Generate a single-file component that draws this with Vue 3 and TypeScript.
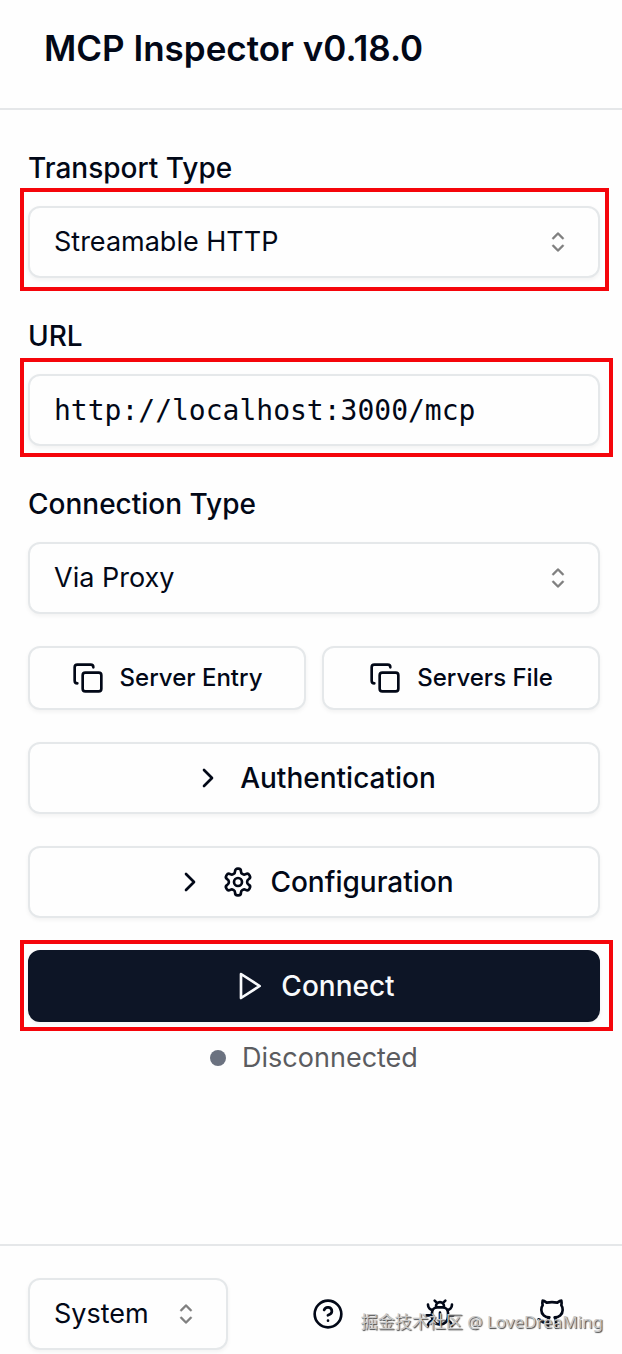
<script setup lang="ts">
import { ref } from 'vue'

const transport = ref('Streamable HTTP')
const url = ref('http://localhost:3000/mcp')
const connection = ref('Via Proxy')
const theme = ref('System')

const caretPath =
  'M4.93 5.43a.45.45 0 0 0 .64.64L7.5 4.14l1.93 1.93a.45.45 0 0 0 .64-.64L7.82 3.18a.45.45 0 0 0-.64 0ZM10.07 9.57a.45.45 0 0 0-.64-.64L7.5 10.86 5.57 8.93a.45.45 0 0 0-.64.64l2.25 2.25a.45.45 0 0 0 .64 0Z'
const copyActions = ['Server Entry', 'Servers File']
</script>

<template>
  <div class="sidebar">
    <header class="header">
      <h1>MCP Inspector v0.18.0</h1>
    </header>

    <main class="body">
      <div class="field">
        <label for="transport">Transport Type</label>
        <div class="select-box marked marked-narrow">
          <select id="transport" v-model="transport">
            <option>Streamable HTTP</option>
            <option>STDIO</option>
            <option>SSE</option>
          </select>
          <svg class="caret" viewBox="0 0 15 15" aria-hidden="true"><path :d="caretPath" /></svg>
        </div>
      </div>

      <div class="field">
        <label for="url">URL</label>
        <div class="marked marked-url">
          <input id="url" v-model="url" type="text" spellcheck="false" />
        </div>
      </div>

      <div class="field">
        <label for="connection">Connection Type</label>
        <div class="select-box">
          <select id="connection" v-model="connection">
            <option>Via Proxy</option>
            <option>Direct</option>
          </select>
          <svg class="caret" viewBox="0 0 15 15" aria-hidden="true"><path :d="caretPath" /></svg>
        </div>
      </div>

      <div class="copy-row">
        <button v-for="name in copyActions" :key="name" type="button" class="btn btn-small">
          <svg class="icon" viewBox="0 0 24 24" aria-hidden="true">
            <rect x="8" y="8" width="14" height="14" rx="2" />
            <path d="M4 16c-1.1 0-2-.9-2-2V4c0-1.1.9-2 2-2h10c1.1 0 2 .9 2 2" />
          </svg>
          {{ name }}
        </button>
      </div>

      <button type="button" class="btn">
        <svg class="icon" viewBox="0 0 24 24" aria-hidden="true"><path d="m9 18 6-6-6-6" /></svg>
        Authentication
      </button>

      <button type="button" class="btn">
        <svg class="icon" viewBox="0 0 24 24" aria-hidden="true"><path d="m9 18 6-6-6-6" /></svg>
        <svg class="icon" viewBox="0 0 24 24" aria-hidden="true">
          <path
            d="M12.22 2h-.44a2 2 0 0 0-2 2v.18a2 2 0 0 1-1 1.73l-.43.25a2 2 0 0 1-2 0l-.15-.08a2 2 0 0 0-2.73.73l-.22.38a2 2 0 0 0 .73 2.73l.15.1a2 2 0 0 1 1 1.72v.51a2 2 0 0 1-1 1.74l-.15.09a2 2 0 0 0-.73 2.73l.22.38a2 2 0 0 0 2.73.73l.15-.08a2 2 0 0 1 2 0l.43.25a2 2 0 0 1 1 1.73V20a2 2 0 0 0 2 2h.44a2 2 0 0 0 2-2v-.18a2 2 0 0 1 1-1.73l.43-.25a2 2 0 0 1 2 0l.15.08a2 2 0 0 0 2.73-.73l.22-.39a2 2 0 0 0-.73-2.73l-.15-.08a2 2 0 0 1-1-1.74v-.5a2 2 0 0 1 1-1.74l.15-.09a2 2 0 0 0 .73-2.73l-.22-.38a2 2 0 0 0-2.73-.73l-.15.08a2 2 0 0 1-2 0l-.43-.25a2 2 0 0 1-1-1.73V4a2 2 0 0 0-2-2z"
          />
          <circle cx="12" cy="12" r="3" />
        </svg>
        Configuration
      </button>

      <div class="connect-group">
        <div class="marked marked-connect">
          <button type="button" class="btn btn-primary">
            <svg class="icon play" viewBox="0 0 24 24" aria-hidden="true"><path d="M6 3 20 12 6 21Z" /></svg>
            Connect
          </button>
        </div>
        <div class="status" role="status">
          <span class="dot"></span>
          <span>Disconnected</span>
        </div>
      </div>
    </main>

    <footer class="footer">
      <div class="select-box theme">
        <select id="theme" v-model="theme" aria-label="Theme">
          <option>System</option>
          <option>Light</option>
          <option>Dark</option>
        </select>
        <svg class="caret" viewBox="0 0 15 15" aria-hidden="true"><path :d="caretPath" /></svg>
      </div>
      <nav class="links">
        <a href="#help" aria-label="Help">
          <svg class="icon" viewBox="0 0 24 24" aria-hidden="true">
            <circle cx="12" cy="12" r="10" />
            <path d="M9.09 9a3 3 0 0 1 5.83 1c0 2-3 3-3 3M12 17h.01" />
          </svg>
        </a>
        <a href="#bug" aria-label="Report a bug">
          <svg class="icon" viewBox="0 0 24 24" aria-hidden="true">
            <path
              d="m8 2 1.88 1.88M14.12 3.88 16 2M9 7.13v-1a3 3 0 1 1 6 0v1M12 20c-3.3 0-6-2.7-6-6v-3a4 4 0 0 1 4-4h4a4 4 0 0 1 4 4v3c0 3.3-2.7 6-6 6M12 20v-9M6.53 9C4.6 8.8 3 7.1 3 5M6 13H2M3 21c0-2.1 1.7-3.9 3.8-4M20.97 5c0 2.1-1.6 3.8-3.5 4M22 13h-4M17.2 17c2.1.1 3.8 1.9 3.8 4"
            />
          </svg>
        </a>
        <a href="#source" aria-label="Source code">
          <svg class="icon" viewBox="0 0 24 24" aria-hidden="true">
            <path
              d="M15 22v-4a4.8 4.8 0 0 0-1-3.5c3 0 6-2 6-5.5.08-1.25-.27-2.48-1-3.5.28-1.15.28-2.35 0-3.5 0 0-1 0-3 1.5-2.64-.5-5.36-.5-8 0C6 2 5 2 5 2c-.3 1.15-.3 2.35 0 3.5A5.4 5.4 0 0 0 4 9c0 3.5 3 5.5 6 5.5-.39.49-.68 1.05-.85 1.65S8.93 17.38 9 18v4M9 18c-4.51 2-5-2-7-2"
            />
          </svg>
        </a>
      </nav>
      <span class="credit">掘金技术社区 @ LoveDreaMing</span>
    </footer>
  </div>
</template>

<style>
body {
  margin: 0;
  background: #fefefe;
}
</style>

<style scoped>
.sidebar {
  display: flex;
  flex-direction: column;
  min-height: 100vh;
  color: #020817;
  font-family: Inter, 'Liberation Sans', sans-serif;
  font-size: 28px;
  line-height: 40px;
}

.sidebar * {
  box-sizing: border-box;
}

.header {
  padding: 20px 44px 32px;
  border-bottom: 2px solid #e5e7e9;
}

h1 {
  margin: 0;
  font-size: 35px;
  font-weight: 600;
  line-height: 56px;
}

.body {
  display: flex;
  flex: 1;
  flex-direction: column;
  gap: 32px;
  padding: 32px 22px 32px 28px;
}

.field {
  display: flex;
  flex-direction: column;
  gap: 12px;
}

label {
  font-weight: 500;
  line-height: 52px;
}

.select-box {
  display: grid;
  align-items: center;
}

.select-box > * {
  grid-area: 1 / 1;
}

select,
input {
  width: 100%;
  height: 72px;
  margin: 0;
  padding: 0 24px;
  border: 2px solid #e5e8ea;
  border-radius: 12px;
  outline: none;
  appearance: none;
  background: #fefefe;
  box-shadow: 0 2px 4px rgb(0 0 0 / 5%);
  color: inherit;
  font: inherit;
}

select,
.status {
  font-size: 27px;
}

input {
  display: block;
  font-family: 'DejaVu Sans Mono', 'Liberation Mono', monospace;
}

.caret {
  justify-self: end;
  width: 32px;
  height: 32px;
  margin-right: 26px;
  fill: #808080;
  stroke: #808080;
  stroke-width: 0.2;
  pointer-events: none;
}

/* Red highlight frames drawn around the steps to follow */
.marked {
  position: relative;
}

.marked::after {
  position: absolute;
  border: 4px solid #f5050b;
  content: '';
  pointer-events: none;
}

.marked-narrow::after {
  inset: -18px -9px -13px -8px;
}

.marked-url::after {
  inset: -16px -13px -11px -8px;
}

.marked-connect::after {
  inset: -10px -13px -9px -8px;
}

.copy-row {
  display: grid;
  grid-template-columns: 1fr 1fr;
  gap: 16px;
}

.btn {
  display: flex;
  align-items: center;
  justify-content: center;
  gap: 16px;
  width: 100%;
  height: 72px;
  padding: 0 16px;
  border: 2px solid #e5e8ea;
  border-radius: 12px;
  background: #fefefe;
  box-shadow: 0 2px 4px rgb(0 0 0 / 5%);
  color: inherit;
  font: inherit;
  font-weight: 500;
  cursor: pointer;
}

.btn-small {
  height: 64px;
  font-size: 24px;
}

.btn-primary {
  border-color: #0d1526;
  background: #0d1526;
  color: #f8fafc;
}

.icon {
  flex: none;
  width: 32px;
  height: 32px;
  fill: none;
  stroke: currentColor;
  stroke-width: 2;
  stroke-linecap: round;
  stroke-linejoin: round;
}

.connect-group {
  display: flex;
  flex-direction: column;
  gap: 16px;
}

.status {
  display: flex;
  align-items: center;
  justify-content: center;
  gap: 16px;
  color: #5b5c60;
}

.dot {
  width: 16px;
  height: 16px;
  border-radius: 50%;
  background: #6b7280;
}

.footer {
  position: relative;
  display: flex;
  align-items: center;
  justify-content: space-between;
  padding: 32px 22px 4px 28px;
  border-top: 2px solid #e5e7e9;
}

.theme {
  width: 200px;
}

.links {
  display: flex;
  gap: 16px;
}

.links a {
  display: flex;
  align-items: center;
  justify-content: center;
  width: 96px;
  height: 72px;
  color: inherit;
}

.credit {
  position: absolute;
  right: 19px;
  bottom: 18px;
  color: #c8c8c8;
  font-family: 'Noto Sans', 'Noto Sans CJK SC', sans-serif;
  font-size: 17px;
  line-height: 28px;
  text-shadow: 1px 1px 1px #444;
  white-space: nowrap;
  pointer-events: none;
}
</style>
